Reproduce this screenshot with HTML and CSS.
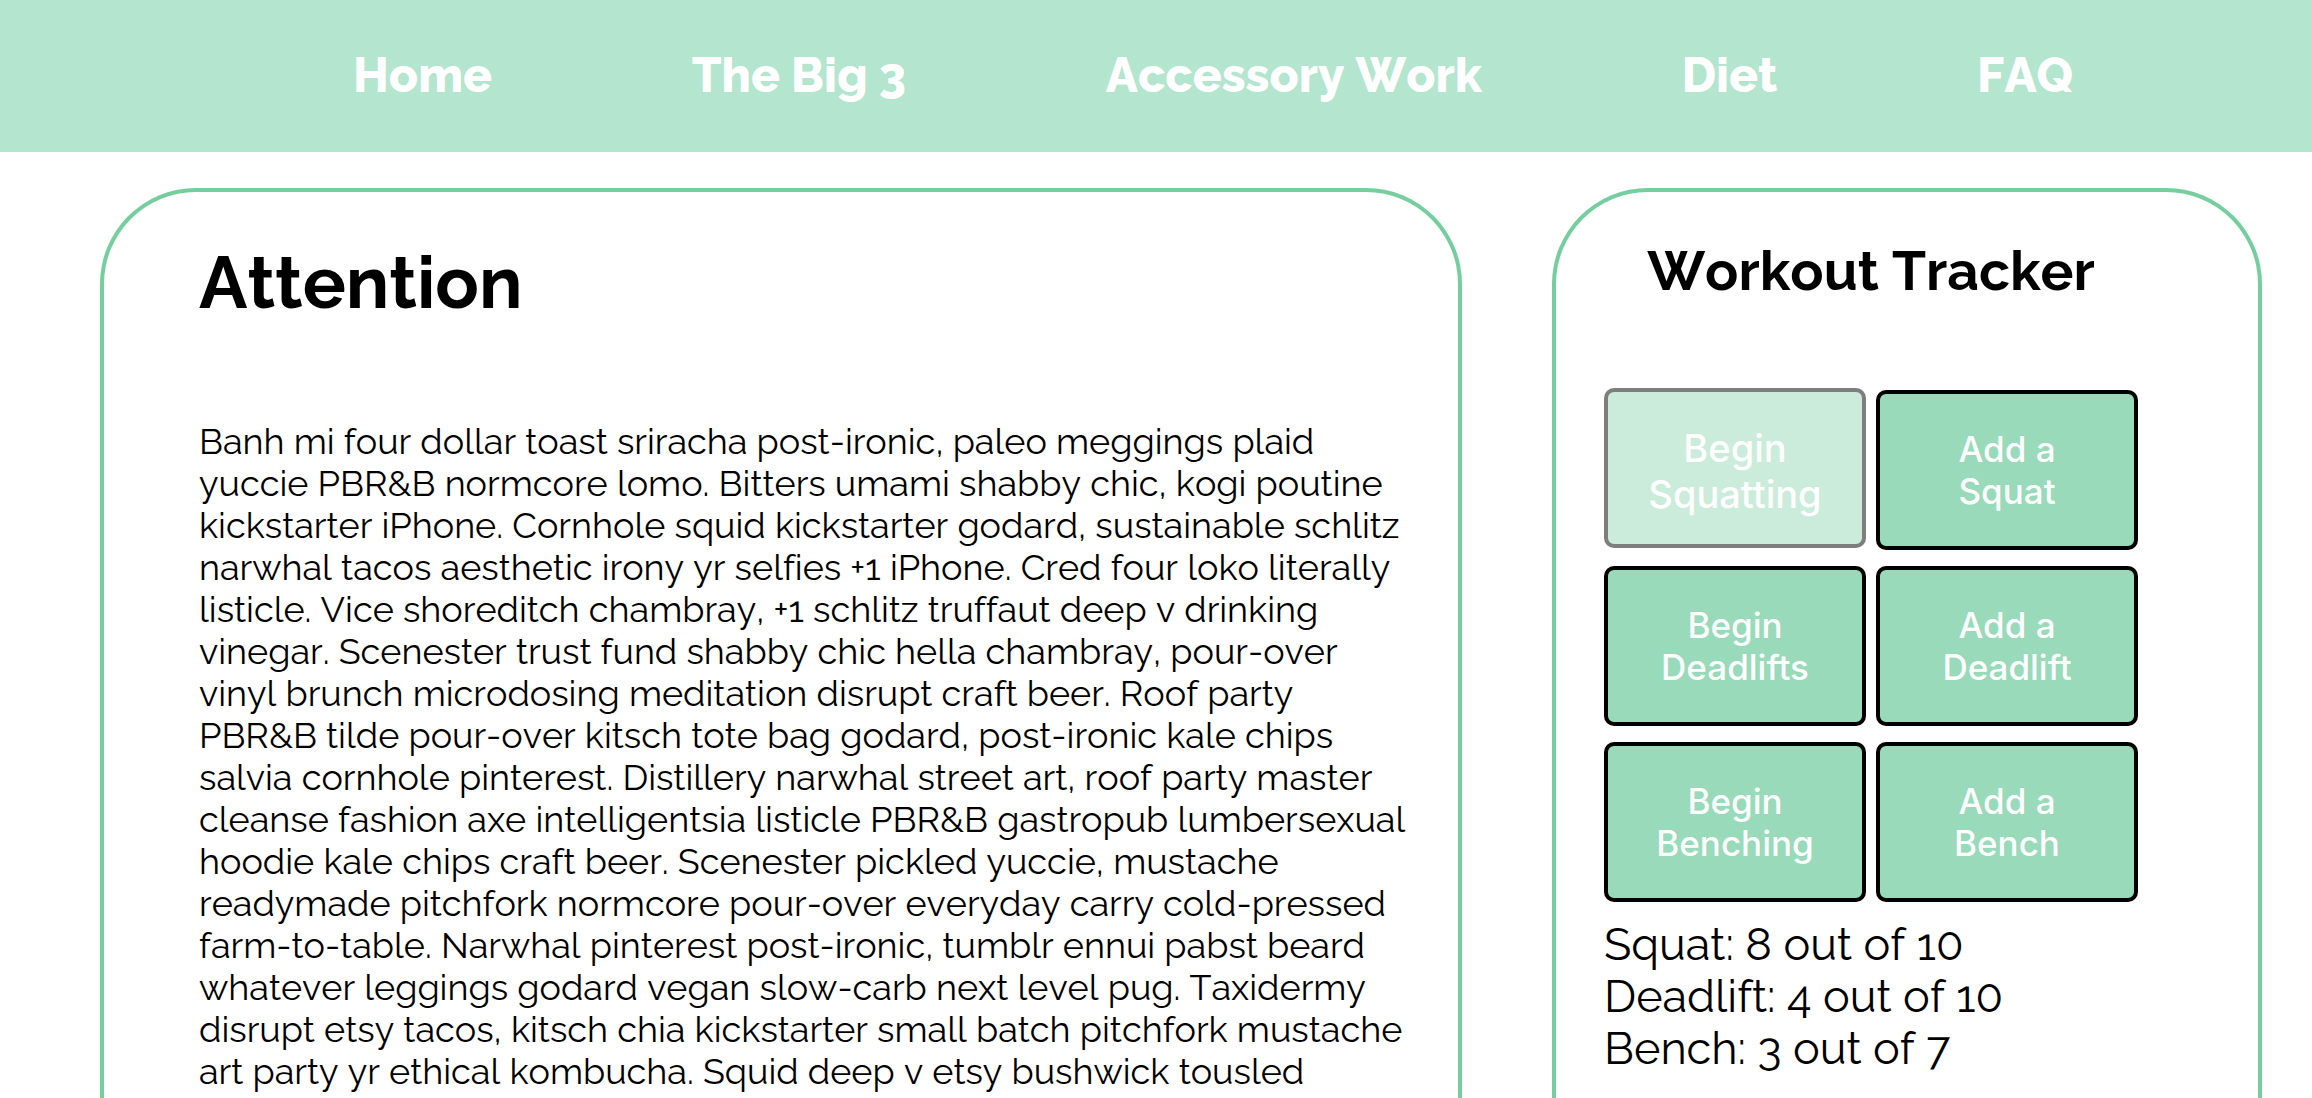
FILE: index.html
```html
<!DOCTYPE html>
<html lang="en">
<head>
<meta charset="utf-8">
<meta name="viewport" content="width=device-width, initial-scale=1">
<title>Workout Tracker</title>
<link rel="stylesheet" href="styles.css">
</head>
<body>
<nav class="nav">
  <a href="#home">Home</a>
  <a href="#big3">The Big 3</a>
  <a href="#accessory">Accessory Work</a>
  <a href="#diet">Diet</a>
  <a href="#faq">FAQ</a>
</nav>
<main class="content">
  <article class="card article">
    <h1>Attention</h1>
    <p>Banh mi four dollar toast sriracha post-ironic, paleo meggings plaid<br>
    yuccie PBR&amp;B normcore lomo. Bitters umami shabby chic, kogi poutine<br>
    kickstarter iPhone. Cornhole squid kickstarter godard, sustainable schlitz<br>
    narwhal tacos aesthetic irony yr selfies +1 iPhone. Cred four loko literally<br>
    listicle. Vice shoreditch chambray, +1 schlitz truffaut deep v drinking<br>
    vinegar. Scenester trust fund shabby chic hella chambray, pour-over<br>
    vinyl brunch microdosing meditation disrupt craft beer. Roof party<br>
    PBR&amp;B tilde pour-over kitsch tote bag godard, post-ironic kale chips<br>
    salvia cornhole pinterest. Distillery narwhal street art, roof party master<br>
    cleanse fashion axe intelligentsia listicle PBR&amp;B gastropub lumbersexual<br>
    hoodie kale chips craft beer. Scenester pickled yuccie, mustache<br>
    readymade pitchfork normcore pour-over everyday carry cold-pressed<br>
    farm-to-table. Narwhal pinterest post-ironic, tumblr ennui pabst beard<br>
    whatever leggings godard vegan slow-carb next level pug. Taxidermy<br>
    disrupt etsy tacos, kitsch chia kickstarter small batch pitchfork mustache<br>
    art party yr ethical kombucha. Squid deep v etsy bushwick tousled</p>
  </article>
  <aside class="card tracker">
    <h2>Workout Tracker</h2>
    <div class="buttons">
      <button class="btn begin" type="button" disabled>Begin<br>Squatting</button>
      <button class="btn add" type="button">Add a<br>Squat</button>
      <button class="btn" type="button">Begin<br>Deadlifts</button>
      <button class="btn" type="button">Add a<br>Deadlift</button>
      <button class="btn" type="button">Begin<br>Benching</button>
      <button class="btn" type="button">Add a<br>Bench</button>
    </div>
    <div class="stats">
      <div>Squat: 8 out of 10</div>
      <div>Deadlift: 4 out of 10</div>
      <div>Bench: 3 out of 7</div>
    </div>
  </aside>
</main>
</body>
</html>
```

FILE: styles.css
```css
* {
  box-sizing: border-box;
}

body {
  margin: 0;
  min-height: 100vh;
  display: flex;
  flex-direction: column;
  background: #fff;
  color: #000;
  font-family: Raleway, Lato, sans-serif;
  font-kerning: none;
  font-variant-ligatures: none;
}

.nav {
  display: flex;
  justify-content: space-between;
  align-items: center;
  height: 152px;
  padding: 0 239px 2px 353px;
  background: #b4e5ce;
}

.nav a {
  color: #fff;
  font-size: 48px;
  font-weight: 800;
  line-height: 56px;
  text-decoration: none;
}

.content {
  flex: 1;
  display: grid;
  grid-template-columns: minmax(0, 1362fr) minmax(0, 710fr);
  gap: 90px;
  padding: 36px 50px 0 100px;
}

.card {
  border: 4px solid #76ce9f;
  border-bottom: 0;
  border-radius: 96px 96px 0 0;
}

.article {
  padding: 49px 0 0 95px;
}

h1 {
  margin: 0 0 95px;
  font-size: 72px;
  line-height: 84px;
}

.article p {
  margin: 0;
  font-size: 36px;
  line-height: 42px;
  white-space: nowrap;
}

.tracker {
  padding: 47px 120px 0 48px;
}

h2 {
  margin: 0 0 85px;
  font-size: 55px;
  line-height: 64px;
  text-align: center;
  white-space: nowrap;
}

.buttons {
  display: grid;
  grid-template-columns: 1fr 1fr;
  grid-template-rows: 162px 160px 160px;
  gap: 16px 10px;
}

.btn {
  height: 160px;
  padding: 0;
  border: 4px solid #000;
  border-radius: 10px;
  background: #98dab9;
  color: #fff;
  font-family: Inter, sans-serif;
  font-size: 35px;
  font-weight: 500;
  line-height: 42px;
}

.begin {
  padding-top: 6px;
  font-size: 38px;
  line-height: 46px;
  opacity: 0.5;
}

.add {
  align-self: end;
}

.stats {
  margin-top: 17px;
  font-size: 45px;
  line-height: 52px;
  white-space: nowrap;
}
```
